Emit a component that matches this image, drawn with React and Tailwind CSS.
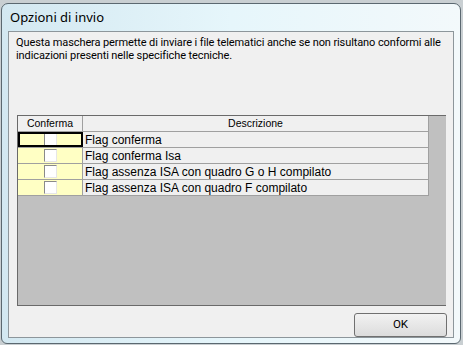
import React from "react";

const rows = [
  "Flag conferma",
  "Flag conferma Isa",
  "Flag assenza ISA con quadro G o H compilato",
  "Flag assenza ISA con quadro F compilato",
];

function CheckBox() {
  return (
    <div className="w-[13px] h-[13px] bg-white border-l border-t border-[#8a8a8a] border-r-[#e6e6e6] border-b-[#e6e6e6] border-r border-b" />
  );
}

export default function App() {
  return (
    <div className="w-[463px] h-[345px] overflow-hidden bg-[#c9cfd2] pt-[3px] pl-[1px]">
      <div className="w-[460px] h-[341px] rounded-t-[7px] rounded-b-[6px] border border-[#5b6870] bg-gradient-to-r from-[#d3e8f1] via-[#e6f6fb] to-[#f3f9fb] flex flex-col px-[6px] pb-[5px]">
        <div className="h-[27px] flex items-center pl-[2px] text-[13px] text-black font-['Noto_Sans',sans-serif]">
          Opzioni di invio
        </div>
        <div className="h-[307px] border border-[#8d969b] bg-[#f0f0f0] flex flex-col">
          <div className="pl-[7px] pt-[4px] text-[11px] leading-[13px] tracking-[-0.1px] text-black font-['Roboto',sans-serif] whitespace-nowrap">
            <div>Questa maschera permette di inviare i file telematici anche se non risultano conformi alle</div>
            <div>indicazioni presenti nelle specifiche tecniche.</div>
          </div>
          <div className="ml-[8px] mt-[53px] w-[429px] h-[193px] border-l border-t border-b border-[#6a6a6a] bg-[#c0c0c0] flex font-['Liberation_Sans',sans-serif] text-[12px] text-black">
            <div className="flex flex-col">
              <div className="flex h-[16px] border-b border-[#a0a0a0] text-[10.5px]">
                <div className="w-[65px] border-r border-[#a0a0a0] bg-[#f0f0f0] flex items-center justify-center">Conferma</div>
                <div className="w-[346px] border-r border-[#a0a0a0] bg-[#f0f0f0] flex items-center justify-center">Descrizione</div>
              </div>
              {rows.map((r, i) => (
                <div key={r} className="flex h-[16px] border-b border-[#a0a0a0]">
                  <div
                    className={
                      i === 0
                        ? "w-[65px] border-r border-[#a0a0a0] bg-[#ffffc4] flex items-center justify-center outline-2 outline-black -outline-offset-2"
                        : "w-[65px] border-r border-[#a0a0a0] bg-[#ffffc4] flex items-center justify-center"
                    }
                  >
                    <CheckBox />
                  </div>
                  <div className="w-[346px] border-r border-[#a0a0a0] bg-[#f0f0f0] flex items-center pl-[2px]">{r}</div>
                </div>
              ))}
            </div>
          </div>
          <div className="flex justify-end pr-[6px] mt-[7px]">
            <button className="w-[93px] h-[24px] rounded-[3px] border border-[#707070] bg-gradient-to-b from-[#f2f2f2] to-[#dcdcdc] text-[11.5px] text-black font-['Roboto',sans-serif]">
              OK
            </button>
          </div>
        </div>
      </div>
    </div>
  );
}
